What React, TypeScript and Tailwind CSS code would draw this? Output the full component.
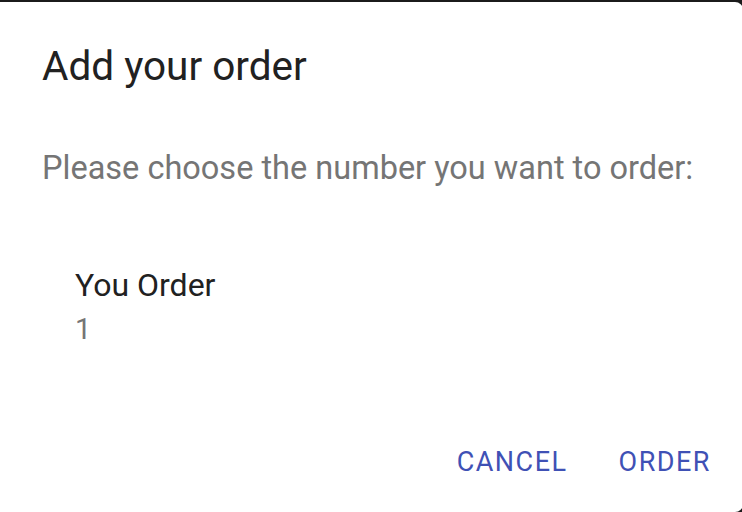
export default function App() {
  return (
    <div className="w-[742px] h-[512px] bg-[#1b1b1b] overflow-hidden pt-[2px] font-['Roboto',sans-serif]">
      <div className="h-[510px] -ml-[10px] w-[753px] bg-white rounded-[8px] flex flex-col pl-[52px] pr-[32px]">
        <h1 className="mt-[40px] text-[40.5px] leading-[48px] text-[#212121] font-normal">Add your order</h1>
        <p className="mt-[58px] text-[32.5px] leading-[40px] text-[#757575] whitespace-nowrap">
          Please choose the number you want to order:
        </p>
        <div className="mt-[77px] pl-[33px] flex flex-col">
          <span className="text-[32px] leading-[40px] text-[#212121]">You Order</span>
          <span className="mt-[6px] text-[29px] leading-[36px] text-[#757575]">1</span>
        </div>
        <div className="mt-[99px] flex justify-end gap-[51px]">
          <button className="text-[27px] leading-[32px] tracking-[1.5px] text-[#3f51b5]">CANCEL</button>
          <button className="text-[27px] leading-[32px] tracking-[1.5px] text-[#3f51b5]">ORDER</button>
        </div>
      </div>
    </div>
  );
}
